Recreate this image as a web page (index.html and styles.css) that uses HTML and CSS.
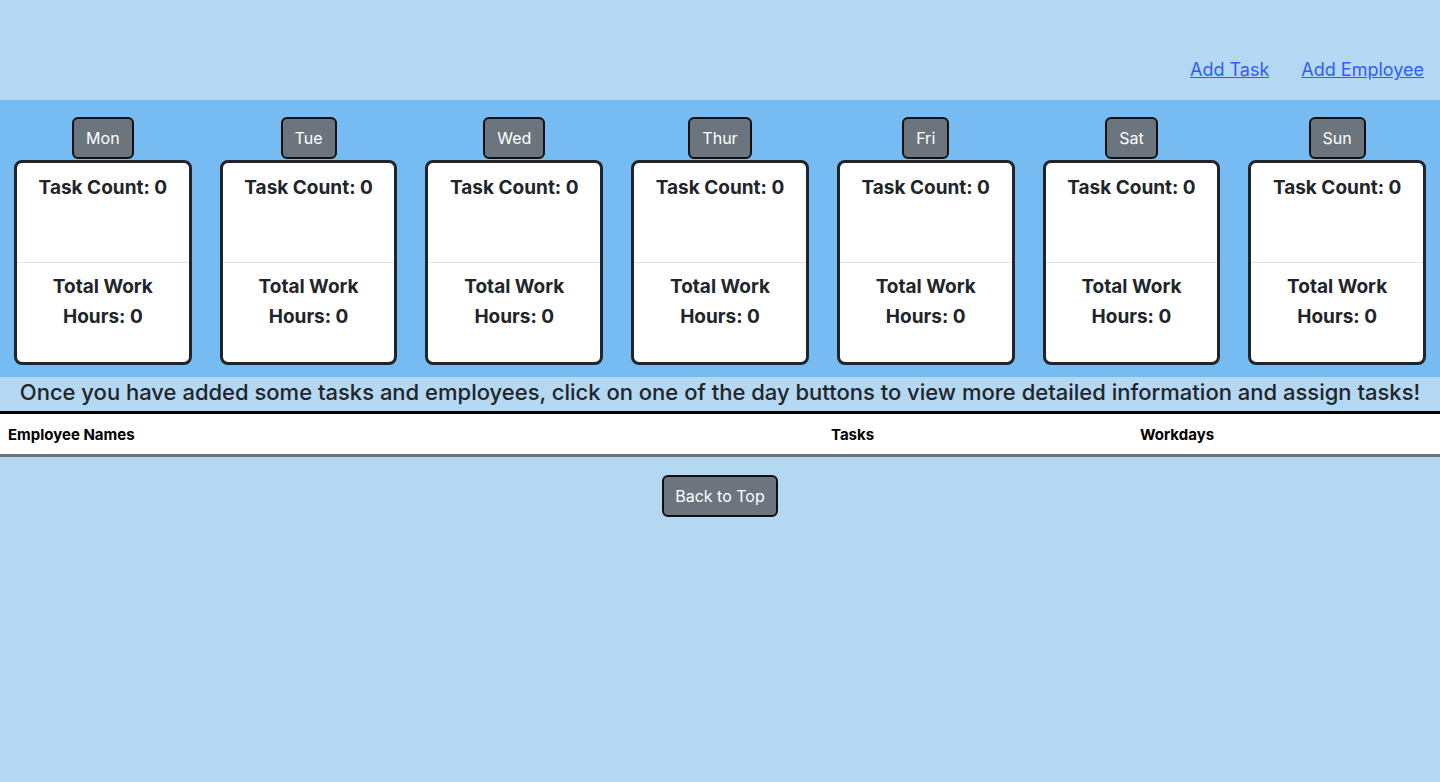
FILE: index.html
```html
<!DOCTYPE html>
<html lang="en">
<head>
<meta charset="utf-8">
<title>Schedule</title>
<link rel="stylesheet" href="styles.css">
</head>
<body>
<header class="top">
  <nav class="links">
    <a href="#">Add Task</a>
    <a href="#">Add Employee</a>
  </nav>
</header>
<section class="week">
  <div class="day"><button class="btn">Mon</button><div class="card"><div class="card-body">Task Count: 0</div><div class="card-footer">Total Work<br>Hours: 0</div></div></div>
  <div class="day"><button class="btn">Tue</button><div class="card"><div class="card-body">Task Count: 0</div><div class="card-footer">Total Work<br>Hours: 0</div></div></div>
  <div class="day"><button class="btn">Wed</button><div class="card"><div class="card-body">Task Count: 0</div><div class="card-footer">Total Work<br>Hours: 0</div></div></div>
  <div class="day"><button class="btn">Thur</button><div class="card"><div class="card-body">Task Count: 0</div><div class="card-footer">Total Work<br>Hours: 0</div></div></div>
  <div class="day"><button class="btn">Fri</button><div class="card"><div class="card-body">Task Count: 0</div><div class="card-footer">Total Work<br>Hours: 0</div></div></div>
  <div class="day"><button class="btn">Sat</button><div class="card"><div class="card-body">Task Count: 0</div><div class="card-footer">Total Work<br>Hours: 0</div></div></div>
  <div class="day"><button class="btn">Sun</button><div class="card"><div class="card-body">Task Count: 0</div><div class="card-footer">Total Work<br>Hours: 0</div></div></div>
</section>
<p class="hint">Once you have added some tasks and employees, click on one of the day buttons to view more detailed information and assign tasks!</p>
<table class="emp">
  <thead>
    <tr><th class="c1">Employee Names</th><th class="c2">Tasks</th><th class="c3">Workdays</th></tr>
  </thead>
</table>
<div class="back"><button class="btn">Back to Top</button></div>
</body>
</html>
```
FILE: styles.css
```css
* { box-sizing: border-box; }
html, body { margin: 0; }
body {
  background: #b4d7f2;
  font-family: Inter, "Noto Sans", "DejaVu Sans", sans-serif;
  color: #212529;
  font-size: 16px;
  min-height: 782px;
}
.top {
  height: 100px;
  display: flex;
  justify-content: flex-end;
  align-items: flex-end;
  padding: 0 16px 18px 0;
}
.links { display: flex; gap: 32px; }
.links a {
  color: #2f5ef6;
  font-size: 18px;
  line-height: 24px;
  text-decoration: underline;
}
.week {
  background: #77bbf3;
  display: grid;
  grid-template-columns: repeat(7, 1fr);
  padding: 17px 0 12px;
}
.day {
  display: flex;
  flex-direction: column;
  align-items: center;
  padding: 0 14px;
}
.btn {
  font-family: inherit;
  font-size: 16px;
  color: #fff;
  background: #6c757d;
  border: 2px solid #111;
  border-radius: 6px;
  padding: 0 12px;
  height: 42px;
  line-height: 38px;
}
.card {
  margin-top: 1px;
  width: 100%;
  height: 205px;
  background: #fff;
  border: 3px solid #212529;
  border-radius: 8px;
  display: flex;
  flex-direction: column;
  text-align: center;
  font-weight: 700;
  font-size: 19px;
  line-height: 30px;
}
.card-body {
  height: 100px;
  padding: 10px 8px 0;
  border-bottom: 1px solid #dee2e6;
}
.card-footer {
  flex: 1;
  padding: 9px 8px 0;
}
.hint {
  margin: 0;
  height: 34px;
  text-align: center;
  font-size: 22px;
  font-weight: 500;
  white-space: nowrap;
  line-height: 30px;
  color: #212529;
}
.emp {
  width: 100%;
  border-collapse: collapse;
  background: #fff;
  border-top: 3px solid #000;
  border-bottom: 3px solid #6c757d;
}
.emp th {
  text-align: left;
  font-size: 15px;
  font-weight: 700;
  color: #000;
  height: 43px;
  padding: 1px 8px 0;
  border-bottom: 1px solid #dee2e6;
}
.emp .c1 { width: 823px; }
.emp .c2 { width: 309px; }
.back {
  display: flex;
  justify-content: center;
  padding-top: 18px;
}
.back .btn { height: 42px; padding: 0 11px; }
```
